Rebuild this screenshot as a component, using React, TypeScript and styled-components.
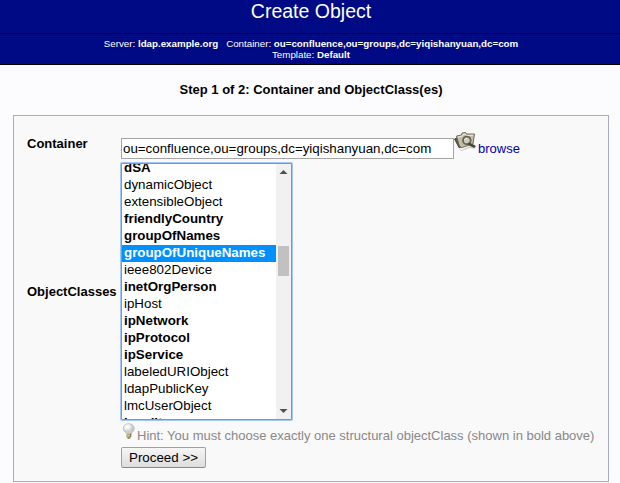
import React from "react";
import styled, { createGlobalStyle } from "styled-components";

const GlobalStyle = createGlobalStyle`
  *, *::before, *::after { box-sizing: border-box; }
  body {
    margin: 0;
    background: #fcfcfe;
    color: #000;
    font: 13px/17px "Liberation Sans", Arial, sans-serif;
    overflow: hidden;
  }
`;

const Page = styled.div`
  display: flex;
  flex-direction: column;
  width: 620px;
  height: 483px;
`;

const Title = styled.h1`
  margin: 0;
  padding-left: 2px;
  height: 34px;
  border-bottom: 1px solid #000;
  background: #000a84;
  color: #fff;
  text-align: center;
  font-size: 19.5px;
  font-weight: 400;
  line-height: 23px;
`;

const Subtitle = styled.div`
  height: 31px;
  padding: 4px 0 0 2px;
  border-bottom: 1px solid #000;
  background: #000a84;
  color: #fff;
  text-align: center;
  font-size: 9.75px;
  line-height: 11px;
`;

const Gap = styled.span`
  display: inline-block;
  width: 8px;
`;

const Step = styled.h2`
  margin: 16px 0 17px;
  padding-left: 2px;
  text-align: center;
  font-size: 13px;
  line-height: 17px;
`;

const Panel = styled.form`
  display: grid;
  grid-template-columns: 94px 1fr;
  grid-template-rows: 25px 257px 24px 23px;
  width: 596px;
  height: 367px;
  margin-left: 13px;
  padding: 22px 0 0 13px;
  border: 1px solid #aaaacc;
  background: #f9f9f9;
`;

const Label = styled.label<{ $top?: boolean }>`
  align-self: ${(p) => (p.$top ? "start" : "center")};
  margin-top: ${(p) => (p.$top ? "-3px" : "0")};
  font-weight: 700;
`;

const ContainerField = styled.div`
  display: flex;
  align-items: flex-start;
`;

const TextInput = styled.input`
  width: 333px;
  height: 21px;
  padding: 0 1px;
  border: 1px solid #a5a5a5;
  border-radius: 0;
  outline: 0;
  background: #fff;
  color: #000;
  font: 13.333px "Liberation Sans", Arial, sans-serif;
`;

const BrowseIcon = styled.svg`
  width: 24px;
  height: 24px;
  margin: -8px 1px 0 -1px;
`;

const BrowseLink = styled.a`
  margin-top: 2px;
  color: #0000aa;
  font-size: 13px;
`;

const ListBox = styled.div`
  display: flex;
  width: 171px;
  height: 257px;
  overflow: hidden;
  border: 1px solid #659be3;
  background: #fff;
  border-radius: 1px;
  box-shadow: 0 0 0 1px #a3c6f5;
`;

const Options = styled.div`
  flex: 1;
  overflow: hidden;
`;

const OptionTrack = styled.div`
  margin-top: -4px;
`;

const Option = styled.div<{ $structural: boolean; $selected: boolean }>`
  height: 17px;
  padding-left: 2px;
  background: ${(p) => (p.$selected ? "#0090ff" : "#fff")};
  color: ${(p) => (p.$selected ? "#fff" : "#000")};
  font-size: 13.333px;
  line-height: 16px;
  font-weight: ${(p) => (p.$structural ? 700 : 400)};
`;

const Scrollbar = styled.div`
  display: flex;
  flex-direction: column;
  align-items: center;
  width: 15px;
  background: #f1f1f1;
`;

const Arrow = styled.svg`
  width: 15px;
  height: 16px;
  flex: none;
`;

const Thumb = styled.div`
  width: 11px;
  height: 30px;
  margin: 66px 0 auto;
  background: #c1c1c1;
`;

const Hint = styled.div`
  grid-column: 2;
  display: flex;
  align-items: flex-start;
  color: #888;
  white-space: nowrap;
`;

const Bulb = styled.svg`
  width: 16px;
  height: 18px;
  margin-top: 3px;
`;

const HintText = styled.span`
  margin-top: 7px;
`;

const Button = styled.button`
  grid-column: 2;
  width: 85px;
  height: 21px;
  margin-top: 3px;
  padding: 0;
  border: 1px solid #a0a0a0;
  border-bottom-color: #898989;
  border-radius: 2px;
  background: linear-gradient(#f6f6f6, #dddddd);
  color: #000;
  font: 13.333px "Liberation Sans", Arial, sans-serif;
`;

const objectClasses: [string, boolean][] = [
  ["dSA", true],
  ["dynamicObject", false],
  ["extensibleObject", false],
  ["friendlyCountry", true],
  ["groupOfNames", true],
  ["groupOfUniqueNames", true],
  ["ieee802Device", false],
  ["inetOrgPerson", true],
  ["ipHost", false],
  ["ipNetwork", true],
  ["ipProtocol", true],
  ["ipService", true],
  ["labeledURIObject", false],
  ["ldapPublicKey", false],
  ["lmcUserObject", false],
  ["locality", true],
];

function FolderSearch() {
  return (
    <BrowseIcon viewBox="0 0 24 24" aria-hidden="true">
      <path d="M3 16 L8 20 L20 15 L22 19 L17 18 L8 21Z" fill="#999" opacity=".45" />
      <path d="M1.5 9 L4 8 L7.5 17.5 L6 17.5 Z" fill="#5f5a4d" stroke="#4c493f" />
      <path d="M3.5 6 L8.5 5 L9 3 L12.5 2.5 L13.5 4 L21.5 4 L20 14 L8 17.8 L6 15Z" fill="#c6bda5" stroke="#625d50" strokeWidth=".9" />
      <path d="M5 7 L9.5 6 L10.5 4 L12 4 L13.5 5.5 L20 5.2" fill="none" stroke="#eee9dc" />
      <circle cx="13.8" cy="10.4" r="3.8" fill="#cfcbbd" stroke="#656155" strokeWidth="1.8" />
      <path d="M11.5 10 Q12 8.2 14.2 8.2" fill="none" stroke="#f2eee2" />
      <path d="M16 13.8 L21.3 16.5" stroke="#49463d" strokeWidth="2.6" strokeLinecap="round" />
    </BrowseIcon>
  );
}

function LightBulb() {
  return (
    <Bulb viewBox="0 0 16 18" aria-hidden="true">
      <defs>
        <radialGradient id="bulb-glass" cx="35%" cy="30%">
          <stop offset="0" stopColor="#fff" />
          <stop offset=".55" stopColor="#edf0f2" />
          <stop offset="1" stopColor="#c5c9cd" />
        </radialGradient>
      </defs>
      <path d="M5.4 10.5 C4.7 9 2.3 8 2.3 5.5 C2.3 2.5 4.8 .7 7.7 .7 C10.7 .7 13.2 2.5 13.2 5.5 C13.2 8 11 9 10.5 10.5Z" fill="url(#bulb-glass)" stroke="#b3b7ba" strokeWidth=".8" />
      <path d="M6.4 10.5 L6 6.5 L7.6 7.5 L9.3 6.5 L9 10.5" fill="none" stroke="#dedbc9" strokeWidth=".7" />
      <path d="M5.3 10.3 H10.3 V13.8 L9 15.5 H7 L5.3 13.8Z" fill="#d8c68e" />
      <path d="M5.3 12 L10.3 11.2 M5.4 13.8 L10.2 13" stroke="#a89362" strokeWidth=".7" />
      <path d="M9.7 10.5 V14" stroke="#776e54" />
      <path d="M6.5 15 H9.3" stroke="#55534c" />
    </Bulb>
  );
}

export default function App() {
  return (
    <>
      <GlobalStyle />
      <Page>
        <Title>Create Object</Title>
        <Subtitle>
          Server: <b>ldap.example.org</b><Gap />Container: <b>ou=confluence,ou=groups,dc=yiqishanyuan,dc=com</b>
          <br />
          Template: <b>Default</b>
        </Subtitle>
        <Step>Step 1 of 2: Container and ObjectClass(es)</Step>
        <Panel onSubmit={(e) => e.preventDefault()}>
          <Label $top htmlFor="container">Container</Label>
          <ContainerField>
            <TextInput id="container" defaultValue="ou=confluence,ou=groups,dc=yiqishanyuan,dc=com" />
            <FolderSearch />
            <BrowseLink>browse</BrowseLink>
          </ContainerField>
          <Label>ObjectClasses</Label>
          <ListBox role="listbox" aria-label="ObjectClasses">
            <Options>
              <OptionTrack>
                {objectClasses.map(([name, structural]) => (
                  <Option
                    key={name}
                    role="option"
                    $structural={structural}
                    $selected={name === "groupOfUniqueNames"}
                  >
                    {name}
                  </Option>
                ))}
              </OptionTrack>
            </Options>
            <Scrollbar>
              <Arrow viewBox="0 0 15 16"><path d="M3.5 10 L7.5 6 L11.5 10Z" fill="#505050" /></Arrow>
              <Thumb />
              <Arrow viewBox="0 0 15 16"><path d="M3.5 6 L7.5 10 L11.5 6Z" fill="#505050" /></Arrow>
            </Scrollbar>
          </ListBox>
          <Hint>
            <LightBulb />
            <HintText>Hint: You must choose exactly one structural objectClass (shown in bold above)</HintText>
          </Hint>
          <Button type="submit">Proceed &gt;&gt;</Button>
        </Panel>
      </Page>
    </>
  );
}
